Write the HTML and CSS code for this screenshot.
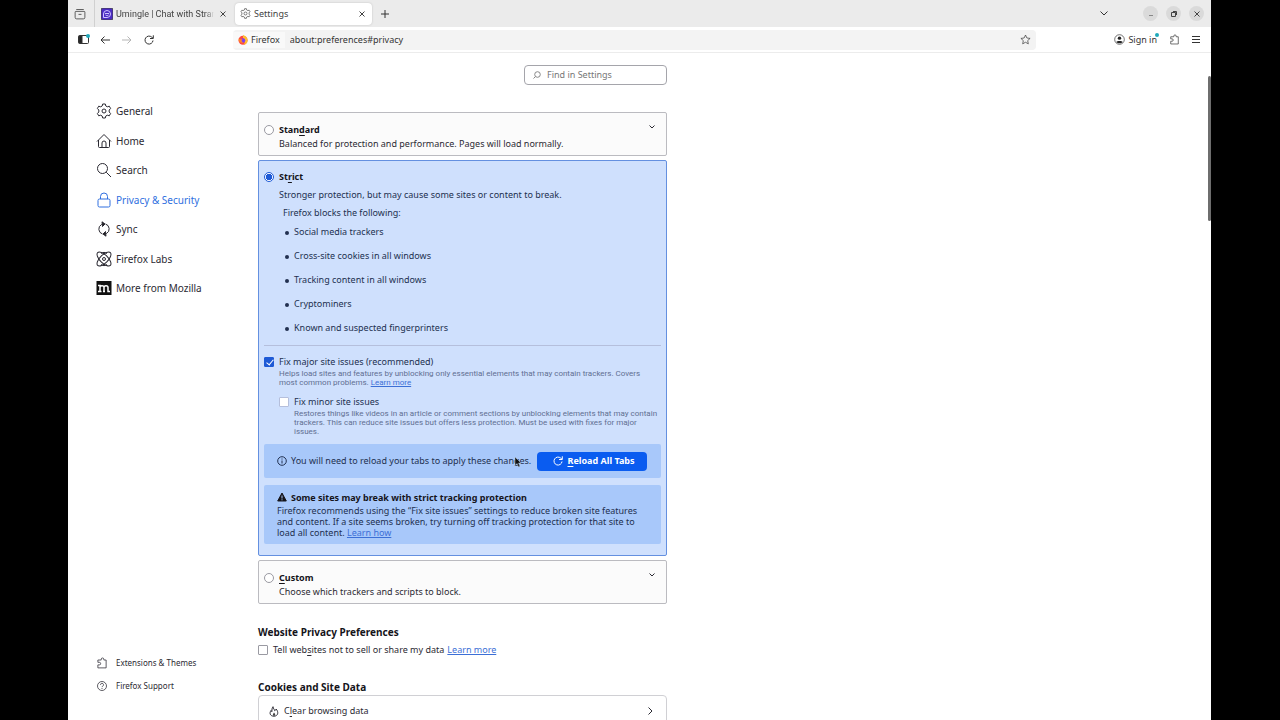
FILE: index.html
```html
<!DOCTYPE html>
<html lang="en">
<head>
    <meta charset="UTF-8">
    <meta name="viewport" content="width=device-width, initial-scale=1.0">
    <title>Settings</title>
    <link rel="stylesheet" href="styles.css">
</head>
<body>
    <div class="window">
        <div class="tabbar">
            <button class="icon-btn recent" aria-label="Recent browsing">
                <svg width="12" height="12" viewBox="0 0 16 16"><path d="M3 2h10M2.500 4.500h11a1 1 0 0 1 1 1v7a2 2 0 0 1-2 2h-9a2 2 0 0 1-2-2v-7a1 1 0 0 1 1-1zM6 8.500h4"/></svg>
            </button>
            <div class="tab">
                <svg class="favicon" width="12" height="12" viewBox="0 0 12 12"><rect width="12" height="12" rx="2" fill="#4b2bc4"/><path d="M2.500 9.500V6a3.500 3.500 0 1 1 3.500 3.500z" fill="none" stroke="#cfc4ff"/><path d="M4 5.500h4M4.500 7c1 .8 2 .8 3 0" stroke="#cfc4ff" fill="none"/></svg>
                <span class="tab-title fade">Umingle | Chat with Stran</span>
                <button class="close" aria-label="Close tab"><svg width="6" height="6" viewBox="0 0 6 6"><path d="M.5.5l5 5M5.500.5l-5 5"/></svg></button>
            </div>
            <div class="tab active">
                <svg class="favicon" width="11" height="11" viewBox="0 0 16 16"><path d="M6.700 1h2.600l.5 2 1.500.8 2-.6 1.300 2.300-1.400 1.500v2l1.400 1.500-1.300 2.300-2-.6-1.500.8-.5 2H6.700l-.5-2-1.500-.8-2 .6-1.300-2.300L2.800 9V7L1.400 5.500l1.300-2.300 2 .6L6.200 3z"/><circle cx="8" cy="8" r="2.200"/></svg>
                <span class="tab-title">Settings</span>
                <button class="close" aria-label="Close tab"><svg width="6" height="6" viewBox="0 0 6 6"><path d="M.5.5l5 5M5.500.5l-5 5"/></svg></button>
            </div>
            <button class="icon-btn new-tab" aria-label="New tab"><svg width="8" height="8" viewBox="0 0 8 8"><path d="M4 0v8M0 4h8"/></svg></button>
            <button class="icon-btn tab-list" aria-label="List all tabs"><svg width="8" height="5" viewBox="0 0 8 5"><path d="M.5.5L4 4 7.500.5"/></svg></button>
            <div class="controls">
                <button aria-label="Minimize"><svg width="6" height="6" viewBox="0 0 6 6"><path d="M1 4.500h4" stroke="#888"/></svg></button>
                <button aria-label="Restore"><svg width="6" height="6" viewBox="0 0 6 6"><path d="M.5 1.500h4v4h-4zM2 .5h3.500V4"/></svg></button>
                <button aria-label="Close"><svg width="6" height="6" viewBox="0 0 6 6"><path d="M.5.5l5 5M5.500.5l-5 5"/></svg></button>
            </div>
        </div>

        <div class="toolbar">
            <button class="icon-btn badge" aria-label="Sidebars"><svg width="11" height="9" viewBox="0 0 11 9"><rect x=".5" y=".5" width="10" height="8" rx="1"/><path d="M1 1h3v7H1z" fill="#222"/></svg></button>
            <button class="icon-btn" aria-label="Back"><svg width="10" height="8" viewBox="0 0 10 8"><path d="M10 4H1M4.500.5L1 4l3.500 3.500"/></svg></button>
            <button class="icon-btn disabled" aria-label="Forward"><svg width="10" height="8" viewBox="0 0 10 8"><path d="M0 4h9M5.500.5L9 4 5.500 7.500"/></svg></button>
            <button class="icon-btn" aria-label="Reload"><svg width="10" height="10" viewBox="0 0 10 10"><path d="M9 5.500A4 4 0 1 1 7.800 2.200L9 3.300M9.300.3v3.200H6"/></svg></button>
            <div class="urlbar">
                <span class="identity">
                    <svg width="10" height="10" viewBox="0 0 10 10"><circle cx="5" cy="5.300" r="4.500" fill="#ff4a3d" stroke="none"/><path d="M5 0c3 1 5 3 4.600 6-.3 2-2 3.600-3.800 3.900C7.500 7 7 4 5 3z" fill="#ffbd2e" stroke="none"/><circle cx="5" cy="5.500" r="2.200" fill="#7b3ff2" stroke="none"/><path d="M.6 3.500C1.300 5 3 3.600 4.600 4.400 3 5 3.500 7 5.500 7.500 3 8.500.5 7 .6 3.500z" fill="#ff8a1f" stroke="none"/></svg>
                    Firefox
                </span>
                <input class="url" type="text" aria-label="Address" value="about:preferences#privacy">
                <button class="icon-btn" aria-label="Bookmark"><svg width="11" height="11" viewBox="0 0 16 16"><path d="M8 1.500l2 4.300 4.700.6-3.500 3.200.9 4.700L8 12l-4.100 2.300.9-4.700L1.300 6.400 6 5.800z"/></svg></button>
            </div>
            <button class="signin badge">
                <svg width="11" height="11" viewBox="0 0 16 16"><circle cx="8" cy="8" r="7"/><circle cx="8" cy="6" r="2.500" fill="#222" stroke="none"/><path d="M3.500 11.500C4 9.500 12 9.500 12.500 11.500 11 14 5 14 3.500 11.500z" fill="#222" stroke="none"/></svg>
                Sign in
            </button>
            <button class="icon-btn" aria-label="Extensions"><svg width="11" height="11" viewBox="0 0 16 16"><path d="M2.500 14.500v-4h2a1.700 1.700 0 0 0 0-3.400h-2V4h4.500V3a1.700 1.700 0 0 1 3.400 0v1h3.100v10.500z"/></svg></button>
            <button class="icon-btn" aria-label="Menu"><svg width="8" height="7" viewBox="0 0 8 7"><path d="M0 .5h8M0 3.500h8M0 6.500h8"/></svg></button>
        </div>

        <div class="page">
            <div class="sidebar">
                <nav class="categories">
                    <a href="#general"><svg width="16" height="16" viewBox="0 0 16 16"><path d="M6.700 1h2.600l.5 2 1.500.8 2-.6 1.300 2.300-1.400 1.500v2l1.400 1.500-1.300 2.300-2-.6-1.500.8-.5 2H6.700l-.5-2-1.500-.8-2 .6-1.300-2.300L2.800 9V7L1.400 5.500l1.300-2.300 2 .6L6.200 3z"/><circle cx="8" cy="8" r="2"/></svg>General</a>
                    <a href="#home"><svg width="16" height="16" viewBox="0 0 16 16"><path d="M1 8.500L8 1.500l7 7M2.500 7v6.500a1 1 0 0 0 1 1h9a1 1 0 0 0 1-1V7M6 14.500V10a2 2 0 0 1 4 0v4.500"/></svg>Home</a>
                    <a href="#search"><svg width="16" height="16" viewBox="0 0 16 16"><circle cx="6.500" cy="6.500" r="5"/><path d="M10.200 10.200l4.800 4.800"/></svg>Search</a>
                    <a class="selected" href="#privacy"><svg width="16" height="16" viewBox="0 0 16 16"><rect x="2" y="7" width="12" height="8" rx="1.500"/><path d="M4.500 7V4.500a3.500 3.500 0 0 1 7 0V7"/></svg>Privacy &amp; Security</a>
                    <a href="#sync"><svg width="16" height="16" viewBox="0 0 16 16"><path d="M6.500 13A5.200 5.200 0 0 1 5.500 3.500L8 3M9.500 3a5.200 5.200 0 0 1 1 9.500L8 13"/><path d="M6 .8L9 3 6.500 5.500zM10 15.200L7 13l2.500-2.500z" fill="#222"/></svg>Sync</a>
                    <a href="#labs"><svg width="16" height="16" viewBox="0 0 16 16"><ellipse cx="8" cy="8" rx="9" ry="4" transform="rotate(45 8 8)"/><ellipse cx="8" cy="8" rx="9" ry="4" transform="rotate(-45 8 8)"/><circle cx="8" cy="8" r="1.500"/><path d="M5 2.500c2-1.500 4-1.500 6 0M5 13.500c2 1.500 4 1.500 6 0"/></svg>Firefox Labs</a>
                    <a href="#mozilla"><svg width="16" height="16" viewBox="0 0 16 16"><rect x=".5" y="1" width="15" height="14" fill="#111" stroke="none"/><path d="M2 5.500h2v6M2 11.500h3.500M4 7.500c0-2 4-2.500 4 0v4M7 11.500h2M8 7.500c0-2 4-2.500 4 0v4h2" stroke="#fff" stroke-width="1.500"/></svg>More from Mozilla</a>
                </nav>
                <nav class="footer-links">
                    <a href="#addons"><svg width="12" height="12" viewBox="0 0 16 16"><path d="M2.500 14.500v-4h2a1.700 1.700 0 0 0 0-3.400h-2V4h4.500V3a1.700 1.700 0 0 1 3.400 0v1h3.100v10.500z"/></svg>Extensions &amp; Themes</a>
                    <a href="#support"><svg width="12" height="12" viewBox="0 0 16 16"><circle cx="8" cy="8" r="6"/><path d="M6 6.500a2 2 0 1 1 2.800 1.800c-.6.300-.8.600-.8 1.200M8 10.700V12"/></svg>Firefox Support</a>
                </nav>
            </div>

            <main class="content">
                <label class="search">
                    <svg width="8" height="8" viewBox="0 0 8 8"><circle cx="4.500" cy="3.500" r="2.800"/><path d="M2.500 5.500L.5 7.500"/></svg>
                    <input type="search" placeholder="Find in Settings" aria-label="Find in Settings">
                </label>

                <section class="card">
                    <label class="option"><input type="radio" name="etp"><span>Stan<u>d</u>ard</span></label>
                    <button class="expand" aria-label="Expand Standard"><svg width="6" height="4" viewBox="0 0 6 4"><path d="M.5.5L3 3 5.500.5"/></svg></button>
                    <p class="desc">Balanced for protection and performance. Pages will load normally.</p>
                </section>

                <section class="card strict">
                    <label class="option"><input type="radio" name="etp" checked><span>St<u>r</u>ict</span></label>
                    <p class="desc">Stronger protection, but may cause some sites or content to break.</p>
                    <p class="blocks">Firefox blocks the following:</p>
                    <ul>
                        <li>Social media trackers</li>
                        <li>Cross-site cookies in all windows</li>
                        <li>Tracking content in all windows</li>
                        <li>Cryptominers</li>
                        <li>Known and suspected fingerprinters</li>
                    </ul>
                    <div class="fixes">
                        <label class="check"><input type="checkbox" checked><span>Fix major site issues (recommended)</span></label>
                        <p class="hint">Helps load sites and features by unblocking only essential elements that may contain trackers. Covers most common problems. <a href="#learn">Learn more</a></p>
                        <div class="nested">
                            <label class="check"><input type="checkbox"><span>Fix minor site issues</span></label>
                            <p class="hint">Restores things like videos in an article or comment sections by unblocking elements that may contain trackers. This can reduce site issues but offers less protection. Must be used with fixes for major issues.</p>
                        </div>
                    </div>
                    <div class="notice reload">
                        <svg width="10" height="10" viewBox="0 0 10 10"><circle cx="5" cy="5" r="4.300"/><path d="M5 4.500v3M5 2.500v1"/></svg>
                        <span class="text">You will need to reload your tabs to apply these changes.</span>
                        <button class="primary"><svg width="10" height="10" viewBox="0 0 10 10"><path d="M9 5.500A4 4 0 1 1 7.800 2.200L9 3.300M9.300.3v3.200H6"/></svg><span><u>R</u>eload All Tabs</span></button>
                        <svg class="cursor" width="8" height="12" viewBox="0 0 8 12"><path d="M1 1v8.500l2-2 1.500 3.500 1.500-.7L4.500 7H7z" fill="#111" stroke="#bcd" stroke-width=".5"/></svg>
                    </div>
                    <div class="notice warning">
                        <h3><svg width="10" height="10" viewBox="0 0 10 10"><path d="M5 1l4.300 8H.7z" fill="#15141a" stroke="#15141a" stroke-linejoin="round"/><path d="M5 3.500v3M5 7.300v1" stroke="#a8c8fa"/></svg>Some sites may break with strict tracking protection</h3>
                        <p>Firefox recommends using the “Fix site issues” settings to reduce broken site features and content. If a site seems broken, try turning off tracking protection for that site to load all content. <a href="#how">Learn how</a></p>
                    </div>
                </section>

                <section class="card">
                    <label class="option"><input type="radio" name="etp"><span><u>C</u>ustom</span></label>
                    <button class="expand" aria-label="Expand Custom"><svg width="6" height="4" viewBox="0 0 6 4"><path d="M.5.5L3 3 5.500.5"/></svg></button>
                    <p class="desc">Choose which trackers and scripts to block.</p>
                </section>

                <h2>Website Privacy Preferences</h2>
                <div class="row">
                    <label class="check"><input type="checkbox"><span>Tell web<u>s</u>ites not to sell or share my data</span></label>
                    <a href="#gpc">Learn more</a>
                </div>

                <h2 class="cookies">Cookies and Site Data</h2>
                <button class="box-button">
                    <svg width="10" height="11" viewBox="0 0 10 11"><path d="M4 .7c.3 2.300 1.300 2.300 1.700 4C7 4 7 3.300 7 3c3 3 2 7.200-2 7.200S.2 7 2 4.500c.3.7.5 1 1 1.200C2.800 3.500 3 2 4 .7z"/><path d="M5 6.500c1.800 1.500 1.500 3.200 0 3.500-1.500-.3-1.500-2 0-3.500z" fill="#444" stroke="none"/></svg>
                    <span>C<u>l</u>ear browsing data</span>
                    <svg class="arrow" width="5" height="8" viewBox="0 0 5 8"><path d="M.5.5L4 4 .5 7.500"/></svg>
                </button>
            </main>
            <div class="scroll-thumb"></div>
        </div>
    </div>
</body>
</html>
```

FILE: styles.css
```css
* {
    box-sizing: border-box;
    margin: 0;
    padding: 0;
}
body {
    height: 100vh;
    overflow: hidden;
    background: #000;
    color: #2b2a33;
    font: 9px/12px "Noto Sans", "Open Sans", sans-serif;
}
button, input {
    font: inherit;
    color: inherit;
    border: 0;
    background: none;
}
svg {
    flex: none;
    fill: none;
    stroke: currentColor;
}
a {
    color: #3c6fd6;
}
u {
    text-underline-offset: 2px;
}
.window {
    display: flex;
    flex-direction: column;
    height: 100%;
    margin: 0 69px 0 68px;
    background: #fff;
}

/* tabs */
.tabbar {
    display: flex;
    align-items: center;
    height: 27px;
    padding-right: 7px;
    background: #ebebeb;
    color: #444;
}
.icon-btn {
    display: flex;
    align-items: center;
    justify-content: center;
    width: 22px;
    height: 20px;
    color: #333;
}
.icon-btn.recent {
    width: 27px;
    height: 27px;
    padding-right: 2px;
    border-right: 1px solid #d0d0d0;
}
.icon-btn.new-tab {
    width: 26px;
}
.tab {
    display: flex;
    align-items: center;
    gap: 3px;
    width: 137px;
    height: 22px;
    margin-left: 1px;
    padding: 0 4px 0 5px;
    border-radius: 4px;
}
.tab.active {
    margin-left: 2px;
    background: #fff;
    box-shadow: 0 0 2px #bbb;
}
.tab-title {
    flex: 1;
    overflow: hidden;
    white-space: nowrap;
}
.tab-title.fade {
    font-family: Roboto, sans-serif;
    -webkit-mask-image: linear-gradient(to left, transparent, #000 8px);
    mask-image: linear-gradient(to left, transparent, #000 8px);
}
.close {
    display: flex;
    padding: 3px;
}
.tab-list {
    margin-left: auto;
    margin-right: 28px;
}
.controls {
    display: flex;
    gap: 8px;
}
.controls button {
    display: flex;
    align-items: center;
    justify-content: center;
    width: 15px;
    height: 15px;
    border-radius: 50%;
    background: #dadada;
}

/* toolbar */
.toolbar {
    display: flex;
    align-items: center;
    height: 26px;
    padding: 0 4px;
    border-bottom: 1px solid #ececec;
    color: #333;
}
.toolbar .disabled {
    color: #b5b5b5;
}
.badge {
    position: relative;
}
.badge::after {
    content: "";
    position: absolute;
    top: 4px;
    right: 4px;
    width: 4px;
    height: 4px;
    border-radius: 50%;
    background: #1fa9bb;
}
.urlbar {
    display: flex;
    align-items: center;
    flex: 1;
    height: 20px;
    margin-left: 73px;
    margin-right: 73px;
    border-radius: 4px;
    background: #f3f3f3;
}
.identity {
    display: flex;
    align-items: center;
    gap: 3px;
    height: 16px;
    padding: 0 5px;
    background: #f9f9f9;
}
.url {
    flex: 1;
    padding-left: 5px;
}
.signin {
    display: flex;
    align-items: center;
    gap: 3px;
    height: 22px;
    padding: 0 6px 0 5px;
}

/* page */
.page {
    position: relative;
    display: flex;
    flex: 1;
    min-height: 0;
    overflow: hidden;
}
.sidebar {
    display: flex;
    flex-direction: column;
    justify-content: space-between;
    width: 190px;
    padding: 45px 0 28px 28px;
}
.sidebar a {
    display: flex;
    align-items: center;
    color: #2b2a33;
    text-decoration: none;
}
.categories {
    display: flex;
    flex-direction: column;
    justify-content: space-between;
    height: 203px;
    font-size: 10px;
}
.categories a {
    gap: 4px;
    height: 26px;
}
.sidebar a.selected {
    color: #2f6fe0;
}
.footer-links {
    display: grid;
    gap: 11px;
    font-size: 8px;
}
.footer-links a {
    gap: 8px;
}
.content {
    width: 409px;
    padding-top: 12px;
}
.search {
    display: flex;
    align-items: center;
    gap: 6px;
    width: 143px;
    height: 20px;
    margin: 0 0 27px auto;
    padding-left: 8px;
    border: 1px solid #a5a5ab;
    border-radius: 4px;
    color: #888;
}
.search input {
    flex: 1;
    min-width: 0;
    outline: 0;
}
.search input::placeholder {
    color: #777;
}

/* tracking protection cards */
.card {
    position: relative;
    margin-bottom: 4px;
    padding: 9px 5px 5px;
    border: 1px solid #bbbbc0;
    border-radius: 2px;
    background: #fbfbfb;
}
.card.strict {
    padding-top: 8px;
    padding-bottom: 11px;
    border-color: #6490e0;
    background: #cfe0fd;
    color: #223050;
}
.option, .check {
    display: flex;
    align-items: center;
    gap: 5px;
}
.option {
    height: 16px;
    font-weight: bold;
    color: #15141a;
}
input[type="radio"], input[type="checkbox"] {
    appearance: none;
    flex: none;
    width: 10px;
    height: 10px;
    border: 1px solid #9a9aa2;
    background: #fff;
}
input[type="radio"] {
    border-radius: 50%;
}
input[type="radio"]:checked {
    border-color: #1e5ad6;
    background: radial-gradient(circle, #1e5ad6 3px, #fff 3px);
}
input[type="checkbox"] {
    border-radius: 1px;
}
input[type="checkbox"]:checked {
    border-color: #1e5ad6;
    background: #1e5ad6;
}
input[type="checkbox"]:checked::after {
    content: "";
    display: block;
    width: 3px;
    height: 6px;
    margin-left: 3px;
    border: solid #fff;
    border-width: 0 1px 1px 0;
    transform: rotate(40deg);
}
.expand {
    position: absolute;
    top: 8px;
    right: 8px;
    display: flex;
    padding: 4px 3px;
}
.desc {
    margin-left: 15px;
}
.strict .desc {
    margin-top: 4px;
}
.blocks {
    margin: 6px 0 7px 19px;
}
.strict ul {
    display: grid;
    gap: 12px;
    margin-left: 30px;
    list-style: none;
}
.strict li {
    position: relative;
}
.strict li::before {
    content: "";
    position: absolute;
    top: 5px;
    left: -9px;
    width: 4px;
    height: 4px;
    border-radius: 50%;
    background: #223050;
}
.fixes {
    margin-top: 11px;
    padding-top: 10px;
    border-top: 1px solid #b5bfdc;
}
/* Roboto runs narrower, keeps the hints to the same number of lines */
.hint {
    margin: 1px 2px 0 15px;
    font-family: Roboto, sans-serif;
    font-size: 8px;
    line-height: 9px;
    color: #5f6f92;
}
.nested {
    margin: 9px 0 0 15px;
}
.nested input {
    border-color: #b5bfdc;
}
.notice {
    position: relative;
    margin-top: 8px;
    border-radius: 2px;
    background: #a8c8fa;
}
.reload {
    display: flex;
    align-items: center;
    gap: 4px;
    height: 34px;
    padding: 0 14px 0 13px;
}
.notice + .notice {
    margin-top: 7px;
}
.reload .text {
    flex: 1;
    white-space: nowrap;
}
.primary {
    display: flex;
    align-items: center;
    justify-content: center;
    gap: 4px;
    width: 110px;
    height: 19px;
    padding-left: 4px;
    border-radius: 4px;
    background: #0a5cf0;
    color: #fff;
    font-weight: bold;
}
.cursor {
    position: absolute;
    top: 12px;
    left: 250px;
}
.warning {
    padding: 6px 13px;
    line-height: 11px;
}
.warning h3 {
    display: flex;
    align-items: center;
    gap: 4px;
    height: 12px;
    margin-bottom: 2px;
    font-size: 9px;
    color: #15141a;
}

/* below the cards */
h2 {
    margin: 20px 0 4px;
    font-size: 10px;
    line-height: 16px;
    color: #15141a;
}
.row {
    display: flex;
    gap: 3px;
}
h2.cookies {
    margin: 23px 0 0;
}
.box-button {
    display: flex;
    align-items: center;
    gap: 5px;
    width: 100%;
    height: 32px;
    padding: 0 13px 0 10px;
    border: 1px solid #d0d0d4;
    border-radius: 4px 4px 0 0;
}
.box-button .arrow {
    margin-left: auto;
}
.scroll-thumb {
    position: absolute;
    top: 23px;
    right: 0;
    width: 3px;
    height: 145px;
    border-radius: 2px;
    background: #6e6e6e;
}
```
